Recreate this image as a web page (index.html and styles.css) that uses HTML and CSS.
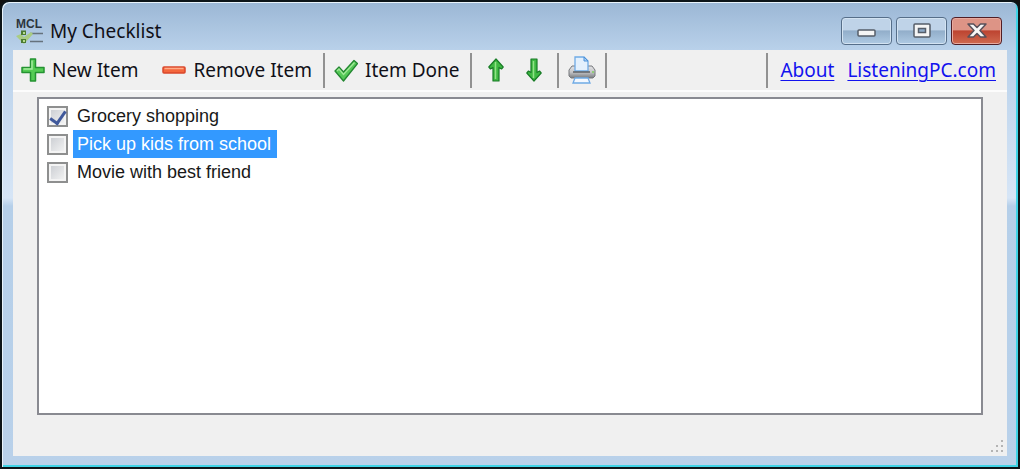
FILE: index.html
```html
<!DOCTYPE html>
<html lang="en">
<head>
<meta charset="utf-8">
<title>My Checklist</title>
<link rel="stylesheet" href="styles.css">
</head>
<body>
<div class="window">
  <header class="titlebar">
    <svg class="app-icon" width="28" height="28" viewBox="0 0 28 28" aria-hidden="true">
      <text class="app-icon-text" x="0" y="11">MCL</text>
      <path d="M14 16.500H27M14 24.500H27" stroke="#66727d" stroke-width="1.500"/>
      <path d="M0 19L5 17L8 20L15 15L17 17L8 27Z" fill="#a9cc83"/>
      <path d="M5 13.500H10V18H5ZM5 22H10V26H5Z" fill="#4c7b32"/>
      <path d="M7 15H9V17H7ZM7 23H9V25H7Z" fill="#b5dc8c"/>
    </svg>
    <h1 class="title">My Checklist</h1>
    <div class="controls">
      <button class="control" type="button" aria-label="Minimize">
        <svg width="20" height="16" viewBox="0 0 20 16"><rect x="1" y="7" width="17" height="6" rx="1" fill="#f5f5f5" stroke="#565d68" stroke-width="1.500"/></svg>
      </button>
      <button class="control" type="button" aria-label="Maximize">
        <svg width="20" height="16" viewBox="0 0 20 16"><rect x="2" y="1" width="16" height="13" rx="1" fill="#f5f5f5" stroke="#565d68" stroke-width="1.500"/><rect x="6.500" y="5.500" width="7" height="4" fill="#8caac8" stroke="#565d68" stroke-width="1.500"/></svg>
      </button>
      <button class="control control-close" type="button" aria-label="Close">
        <svg width="20" height="16" viewBox="0 0 20 16"><path d="M1 1H6.500L10 4.500L13.500 1H19L13 7.500L19 14H13.500L10 10.500L6.500 14H1L7 7.500Z" fill="#f7f7f7" stroke="#59505a" stroke-width="1.500" stroke-linejoin="round"/></svg>
      </button>
    </div>
  </header>
  <main class="client">
    <nav class="toolbar" aria-label="Checklist tools">
      <div class="group group-first">
        <button class="tool" type="button">
          <svg width="24" height="24" viewBox="0 0 24 24"><path d="M9.500 1H14.500V9.500H23V14.500H14.500V23H9.500V14.500H1V9.500H9.500Z" fill="#55cc55" stroke="#249332" stroke-width="1.500" stroke-linejoin="round"/><path d="M11 2.500V11H2.500" fill="none" stroke="#a5eca0" stroke-width="1.500"/></svg>
          New Item
        </button>
        <button class="tool" type="button">
          <svg width="24" height="24" viewBox="0 0 24 24"><rect x="1" y="9" width="22" height="6" rx="1" fill="#f4673d" stroke="#d9472b" stroke-width="1.500"/><path d="M2.500 10.500H21.500" stroke="#ffac89" stroke-width="1.500"/></svg>
          Remove Item
        </button>
      </div>
      <div class="group group-done">
        <button class="tool" type="button">
          <svg width="24" height="24" viewBox="0 0 24 24"><path d="M1 13L5 9L9.500 14L20 2.500L23.500 5.500L9.500 23Z" fill="#55c957" stroke="#238731" stroke-width="1.300" stroke-linejoin="round"/><path d="M3 13L5 11L9.500 16.500L20.500 4.500" fill="none" stroke="#a1e798" stroke-width="1.300"/></svg>
          Item Done
        </button>
      </div>
      <div class="group group-move">
        <button class="tool" type="button" aria-label="Move up">
          <svg width="16" height="24" viewBox="0 0 16 24"><path d="M8 1L15.200 9L13.500 11L11 9.500V23H5V9.500L2.500 11L.8 9Z" fill="#3fb943" stroke="#187c26" stroke-width="1.200" stroke-linejoin="round"/><path d="M7.500 4V21" stroke="#91e287" stroke-width="1.500"/></svg>
        </button>
        <button class="tool" type="button" aria-label="Move down">
          <svg width="16" height="24" viewBox="0 0 16 24"><path d="M8 23L15.200 15L13.500 13L11 14.500V1H5V14.500L2.500 13L.8 15Z" fill="#3fb943" stroke="#187c26" stroke-width="1.200" stroke-linejoin="round"/><path d="M7.500 3V20" stroke="#91e287" stroke-width="1.500"/></svg>
        </button>
      </div>
      <div class="group group-print">
        <button class="tool" type="button" aria-label="Print">
          <svg width="28" height="28" viewBox="0 0 28 28">
            <defs><linearGradient id="metal" x2="0" y2="1"><stop stop-color="#e4e4e6"/><stop offset=".5" stop-color="#c5c6c9"/><stop offset="1" stop-color="#777a7e"/></linearGradient></defs>
            <path d="M4 10H24L27 14V20L25 22H3L1 20V14Z" fill="url(#metal)" stroke="#77797d" stroke-linejoin="round"/>
            <path d="M7 15V1H16L20 5V15Z" fill="#e3f0fd" stroke="#6faae5" stroke-width="1.300"/>
            <path d="M16 1V5H20Z" fill="#a9cef4" stroke="#4c91d8"/>
            <path d="M5 16H22" stroke="#5d6065" stroke-width="1.500"/>
            <path d="M24 16H26" stroke="#7fd05d" stroke-width="1.500"/>
            <path d="M7 22H20L22 27H5Z" fill="#f3f8ff" stroke="#6faae5" stroke-width="1.300"/>
          </svg>
        </button>
      </div>
      <div class="links">
        <a class="link" href="#about">About</a>
        <a class="link" href="#home">ListeningPC.com</a>
      </div>
    </nav>
    <ul class="checklist">
      <li class="item"><input class="check" type="checkbox" id="grocery" checked><label class="label" for="grocery">Grocery shopping</label></li>
      <li class="item"><input class="check" type="checkbox" id="kids"><label class="label label-selected" for="kids">Pick up kids from school</label></li>
      <li class="item"><input class="check" type="checkbox" id="movie"><label class="label" for="movie">Movie with best friend</label></li>
    </ul>
    <footer class="statusbar">
      <svg width="14" height="14" viewBox="0 0 14 14" aria-hidden="true"><path d="M10 0h2v2h-2zM5 5h2v2H5zM10 5h2v2h-2zM0 10h2v2H0zM5 10h2v2H5zM10 10h2v2h-2z" fill="#b4b4b4"/></svg>
    </footer>
  </main>
</div>
</body>
</html>
```
FILE: styles.css
```css
* {
  box-sizing: border-box;
}

body {
  margin: 0;
  background: #101010;
  font-family: "Noto Sans", "Open Sans", sans-serif;
}

.window {
  display: flex;
  flex-direction: column;
  height: 100vh;
  padding: 0 11px 11px;
  border: 2px solid #0c1418;
  border-radius: 9px 9px 0 0;
  background: linear-gradient(#9bb7d5, #b9d1ea 48px, #d6e5f6 196px, #b5cfe9 204px, #b9d1ea);
  box-shadow: inset 1px 1px #e8f3fb, inset -2px -2px #3fd3e6;
}

.titlebar {
  display: flex;
  flex: none;
  align-items: center;
  height: 48px;
  padding: 10px 5px 0 3px;
}

.app-icon {
  flex: none;
  margin-right: 6px;
}

.app-icon-text {
  fill: #2d353d;
  font-family: "Liberation Sans", Arial, sans-serif;
  font-size: 12px;
  font-weight: 700;
}

.title {
  flex: 1;
  margin: 0;
  color: #101018;
  font-size: 19px;
  font-weight: 400;
  line-height: 24px;
}

.controls {
  display: flex;
  gap: 4px;
}

.control {
  display: grid;
  place-items: center;
  width: 51px;
  height: 28px;
  padding: 0;
  border: 1px solid #566e89;
  border-radius: 4px;
  background: linear-gradient(#bfd3e8 45%, #92aeca 50%, #afcae3);
  box-shadow: inset 0 0 0 1px #d3e3f2;
}

.control-close {
  border-color: #511e25;
  background: linear-gradient(#dd9486 45%, #bd4431 50%, #cf6a50);
  box-shadow: inset 0 0 0 1px #e8aaa0;
}

.client {
  display: flex;
  flex: 1;
  flex-direction: column;
  min-height: 0;
  background: #f0f0f0;
}

.toolbar {
  display: flex;
  flex: none;
  align-items: center;
  height: 42px;
  border-bottom: 2px solid #fcfcfc;
}

.group {
  display: flex;
  align-items: center;
  height: 35px;
  border-right: 2px solid #919191;
}

.group-first {
  gap: 24px;
  padding: 0 11px 0 8px;
}

.group-done {
  padding: 0 10px 0 9px;
}

.group-move {
  gap: 22px;
  padding: 0 15px 0 16px;
}

.group-print {
  padding: 0 9px;
}

.tool {
  display: flex;
  gap: 7px;
  align-items: center;
  padding: 0;
  border: 0;
  background: none;
  color: #101018;
  font-family: inherit;
  font-size: 19px;
  line-height: 24px;
  white-space: nowrap;
}

.links {
  display: flex;
  gap: 13px;
  align-items: center;
  height: 35px;
  margin-left: auto;
  padding: 0 11px 0 12px;
  border-left: 2px solid #919191;
}

.link {
  color: #1212ee;
  font-size: 19px;
  line-height: 24px;
  text-decoration-thickness: 1px;
  text-underline-offset: 3px;
}

.checklist {
  flex: 1;
  min-height: 0;
  margin: 5px 24px 0;
  padding: 3px 8px;
  border: 2px solid #898a91;
  background: #fff;
  list-style: none;
  font-family: "Liberation Sans", Arial, sans-serif;
}

.item {
  display: flex;
  gap: 5px;
  align-items: center;
}

.check {
  display: grid;
  place-items: center;
  width: 21px;
  height: 21px;
  margin: 0;
  border: 2px solid #8e8f8f;
  outline: 2px solid #f4f4f4;
  outline-offset: -4px;
  background: linear-gradient(135deg, #c8cbd0, #f6f6f6);
  appearance: none;
}

.check:checked::before {
  width: 7px;
  height: 13px;
  margin-bottom: 3px;
  border: solid #40599b;
  border-width: 0 3px 3px 0;
  content: "";
  rotate: 35deg;
}

.label {
  padding: 0 6px 0 4px;
  color: #181818;
  font-size: 18px;
  line-height: 28px;
}

.label-selected {
  background: #3399ff;
  color: #fff;
}

.statusbar {
  display: flex;
  flex: none;
  align-items: flex-end;
  justify-content: flex-end;
  height: 41px;
  padding: 0 2px 2px;
}
```
